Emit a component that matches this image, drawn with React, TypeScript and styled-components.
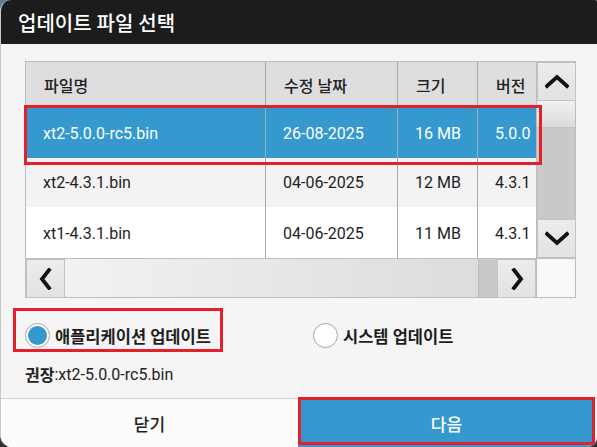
import React from "react";
import styled, { createGlobalStyle, css } from "styled-components";

const GlobalStyle = createGlobalStyle`
  html, body {
    margin: 0;
    padding: 0;
  }
  body {
    width: 597px;
    height: 447px;
    overflow: hidden;
    background: linear-gradient(180deg, #5b7e9c 0%, #46586a 40%, #333 100%);
    font-family: Roboto, "Noto Sans CJK KR", sans-serif;
    color: #1e1e1e;
  }
`;

const Dialog = styled.div`
  width: 597px;
  height: 447px;
  box-sizing: border-box;
  display: flex;
  flex-direction: column;
  background: #f5f5f5;
  border-left: 1px solid #c9c9c9;
  border-radius: 11px 2px 10px 12px;
  overflow: hidden;
`;

const TitleBar = styled.div`
  height: 44px;
  flex: none;
  display: flex;
  align-items: center;
  padding-left: 17px;
  background: #1c1c1c;
  color: #fff;
  font-size: 20px;
  font-weight: 500;
  white-space: nowrap;
`;

const Body = styled.div`
  flex: 1;
  display: flex;
  flex-direction: column;
  padding: 17px 0 0 24px;
`;

const TableFrame = styled.div`
  position: relative;
  width: 551px;
  height: 237px;
  box-sizing: border-box;
  border: 1px solid #bdbdbd;
  display: grid;
  grid-template-columns: 1fr 39px;
  grid-template-rows: 1fr 39px;
  background: #fff;
`;

const Viewport = styled.div`
  overflow: hidden;
  display: flex;
  flex-direction: column;
`;

const COLS = "240px 132px 80px 59px";

const HeaderRow = styled.div`
  height: 46px;
  flex: none;
  display: grid;
  grid-template-columns: ${COLS};
  background: #dedede;
`;

const HeaderCell = styled.div<{ $last?: boolean }>`
  display: flex;
  align-items: center;
  padding-left: 18px;
  border-right: ${(p) => (p.$last ? "none" : "1px solid #a9a9a9")};
  font-size: 16px;
  font-weight: 500;
  color: #222;
  white-space: nowrap;
  overflow: hidden;
`;

const Row = styled.div<{ $tone: "selected" | "alt" | "plain"; $height: number }>`
  position: relative;
  flex: none;
  height: ${(p) => p.$height}px;
  display: grid;
  grid-template-columns: ${COLS};
  background: ${(p) =>
    p.$tone === "selected" ? "#3598cf" : p.$tone === "alt" ? "#f3f3f3" : "#ffffff"};
  color: ${(p) => (p.$tone === "selected" ? "#fff" : "#1e1e1e")};
`;

const Cell = styled.div<{ $last?: boolean }>`
  display: flex;
  align-items: center;
  padding-left: 17px;
  border-right: ${(p) => (p.$last ? "none" : "1px solid #a9a9a9")};
  font-size: 16px;
  white-space: nowrap;
  overflow: hidden;
`;

const Marker = styled.div`
  position: absolute;
  pointer-events: none;
  border: 3px solid #e4202b;
  box-sizing: border-box;
`;

const RowMarker = styled(Marker)`
  left: -2px;
  top: 43px;
  width: 518px;
  height: 60px;
`;

const VScroll = styled.div`
  display: flex;
  flex-direction: column;
  border-left: 1px solid #bdbdbd;
`;

const HScroll = styled.div`
  display: flex;
  border-top: 1px solid #bdbdbd;
`;

const ScrollButton = styled.div`
  flex: none;
  width: 39px;
  height: 39px;
  box-sizing: border-box;
  display: flex;
  align-items: center;
  justify-content: center;
  background: linear-gradient(180deg, #ececec, #e2e2e2);
  border: 1px solid #c2c2c2;
`;

const VThumb = styled.div`
  height: 26px;
  flex: none;
  background: linear-gradient(180deg, #f1f1f1, #dadada);
  border-bottom: 1px solid #c4c4c4;
`;

const VTrack = styled.div`
  flex: 1;
  background: #c9c9c9;
`;

const HThumb = styled.div`
  flex: 1;
  background: linear-gradient(90deg, #f2f2f2, #dcdcdc);
`;

const HTrack = styled.div`
  width: 18px;
  flex: none;
  background: #c9c9c9;
  border-left: 1px solid #bdbdbd;
`;

const Corner = styled.div`
  background: #f9f9f9;
  border-top: 1px solid #bdbdbd;
  border-left: 1px solid #bdbdbd;
`;

const Choices = styled.div`
  display: grid;
  grid-template-columns: 288px auto;
  align-items: center;
  margin-top: 25px;
  height: 24px;
`;

const Choice = styled.label<{ $marked?: boolean }>`
  position: relative;
  display: flex;
  align-items: center;
  gap: 5px;
  font-size: 16.5px;
  font-weight: 700;
  color: #1e1e1e;
  white-space: nowrap;
  ${(p) =>
    p.$marked &&
    css`
      &::after {
        content: "";
        position: absolute;
        left: -12px;
        top: -15px;
        width: 210px;
        height: 44px;
        border: 3px solid #e4202b;
        box-sizing: border-box;
      }
    `}
`;

const RadioDot = styled.span<{ $on?: boolean }>`
  width: 25px;
  height: 25px;
  box-sizing: border-box;
  border-radius: 50%;
  border: 1px solid #a8a8a8;
  background: #fff;
  display: flex;
  align-items: center;
  justify-content: center;
  flex: none;
  &::before {
    content: "";
    width: 19px;
    height: 19px;
    border-radius: 50%;
    background: ${(p) => (p.$on ? "#3598d0" : "transparent")};
  }
`;

const Hint = styled.div`
  margin-top: 15px;
  font-size: 16px;
  color: #222;
  display: flex;
  align-items: center;
  white-space: pre;
`;

const HintLabel = styled.span`
  font-size: 16px;
  font-weight: 700;
`;

const Footer = styled.div`
  height: 48px;
  flex: none;
  display: grid;
  grid-template-columns: 297px 297px 1fr;
  border-top: 1px solid #d0d0d0;
  background: #fcfcfc;
`;

const FooterButton = styled.div<{ $primary?: boolean }>`
  position: relative;
  display: flex;
  align-items: center;
  justify-content: center;
  font-size: 17px;
  font-weight: 500;
  color: ${(p) => (p.$primary ? "#fff" : "#1e1e1e")};
  background: ${(p) => (p.$primary ? "#3598cf" : "#fcfcfc")};
`;

const ButtonMarker = styled(Marker)`
  left: 0;
  top: -2px;
  right: 0;
  bottom: 2px;
`;

const Chevron = ({ dir }: { dir: "up" | "down" | "left" | "right" }) => {
  const pts: Record<string, string> = {
    up: "2,12 12,3 22,12",
    down: "2,3 12,12 22,3",
    left: "10,2 3,11 10,20",
    right: "4,2 11,11 4,20",
  };
  const vertical = dir === "up" || dir === "down";
  return (
    <svg
      width={vertical ? 24 : 14}
      height={vertical ? 15 : 22}
      viewBox={vertical ? "0 0 24 15" : "0 0 14 22"}
    >
      <polyline
        points={pts[dir]}
        fill="none"
        stroke="#111"
        strokeWidth={3.8}
        strokeLinecap="square"
      />
    </svg>
  );
};

const files = [
  { name: "xt2-5.0.0-rc5.bin", date: "26-08-2025", size: "16 MB", ver: "5.0.0", tone: "selected" as const, h: 50 },
  { name: "xt2-4.3.1.bin", date: "04-06-2025", size: "12 MB", ver: "4.3.1", tone: "alt" as const, h: 49 },
  { name: "xt1-4.3.1.bin", date: "04-06-2025", size: "11 MB", ver: "4.3.1", tone: "plain" as const, h: 52 },
];

const headers = ["파일명", "수정 날짜", "크기", "버전"];

export default function App() {
  return (
    <>
      <GlobalStyle />
      <Dialog>
        <TitleBar>업데이트 파일 선택</TitleBar>
        <Body>
          <TableFrame>
            <Viewport>
              <HeaderRow>
                {headers.map((h, i) => (
                  <HeaderCell key={h} $last={i === headers.length - 1}>
                    {h}
                  </HeaderCell>
                ))}
              </HeaderRow>
              {files.map((f) => (
                <Row key={f.name} $tone={f.tone} $height={f.h}>
                  <Cell>{f.name}</Cell>
                  <Cell>{f.date}</Cell>
                  <Cell>{f.size}</Cell>
                  <Cell $last>{f.ver}</Cell>
                </Row>
              ))}
            </Viewport>
            <VScroll>
              <ScrollButton>
                <Chevron dir="up" />
              </ScrollButton>
              <VThumb />
              <VTrack />
              <ScrollButton>
                <Chevron dir="down" />
              </ScrollButton>
            </VScroll>
            <HScroll>
              <ScrollButton>
                <Chevron dir="left" />
              </ScrollButton>
              <HThumb />
              <HTrack />
              <ScrollButton>
                <Chevron dir="right" />
              </ScrollButton>
            </HScroll>
            <Corner />
            <RowMarker />
          </TableFrame>

          <Choices>
            <Choice $marked>
              <RadioDot $on />
              애플리케이션 업데이트
            </Choice>
            <Choice>
              <RadioDot />
              시스템 업데이트
            </Choice>
          </Choices>

          <Hint>
            <HintLabel>권장</HintLabel>:xt2-5.0.0-rc5.bin
          </Hint>
        </Body>
        <Footer>
          <FooterButton>닫기</FooterButton>
          <FooterButton $primary>
            다음
            <ButtonMarker />
          </FooterButton>
          <div />
        </Footer>
      </Dialog>
    </>
  );
}
